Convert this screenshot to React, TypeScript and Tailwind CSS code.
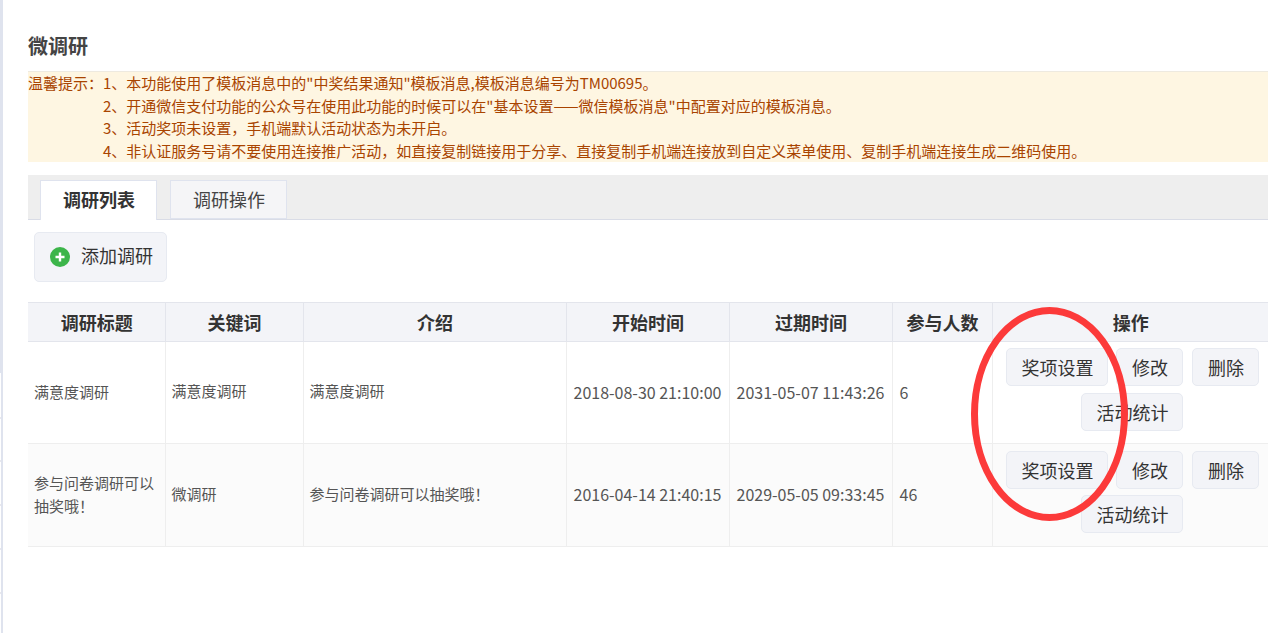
const notes = [
  '1、本功能使用了模板消息中的"中奖结果通知"模板消息,模板消息编号为TM00695。',
  '2、开通微信支付功能的公众号在使用此功能的时候可以在"基本设置——微信模板消息"中配置对应的模板消息。',
  '3、活动奖项未设置，手机端默认活动状态为未开启。',
  '4、非认证服务号请不要使用连接推广活动，如直接复制链接用于分享、直接复制手机端连接放到自定义菜单使用、复制手机端连接生成二维码使用。',
]

const rows = [
  { title: '满意度调研', keyword: '满意度调研', intro: '满意度调研', start: '2018-08-30 21:10:00', end: '2031-05-07 11:43:26', count: '6' },
  { title: '参与问卷调研可以抽奖哦！', keyword: '微调研', intro: '参与问卷调研可以抽奖哦！', start: '2016-04-14 21:40:15', end: '2029-05-05 09:33:45', count: '46' },
]

const font = { fontFamily: '"Microsoft YaHei", "Noto Sans CJK SC", sans-serif' }

function Btn({ children, className = '' }: { children: string; className?: string }) {
  return (
    <a className={`flex h-[38px] items-center justify-center rounded-[5px] border border-[#e7eaf1] bg-[#f3f4f8] pl-[1px] text-[18px] text-[#333] ${className}`}>
      {children}
    </a>
  )
}

export default function App() {
  return (
    <div className="relative h-[633px] w-[1288px] overflow-hidden bg-white" style={font}>
      {/* edge of the sidebar left in the capture */}
      <div className="absolute left-0 top-0 h-[373px] w-[3px] bg-[#dfe3ee]" />
      <div className="absolute bottom-0 left-[1px] top-[373px] w-[2px] bg-[#dfe3ee]" />
      {[417, 460, 504, 548, 592].map((y) => (
        <div key={y} className="absolute left-0 h-[2px] w-[1px] bg-[#e8e8ee]" style={{ top: y }} />
      ))}

      <div className="pl-[28px] pr-[20px] pt-[32px]">
        <h1 className="h-[39px] text-[20px] font-bold leading-[28px] text-[#444]">微调研</h1>
        <div className="flex h-[91px] border-t border-[#eeeae0] bg-[#fef6e2] text-[15px] leading-[22.5px] text-[#a94400]">
          <div className="w-[75px] shrink-0 whitespace-nowrap">温馨提示：</div>
          <div>
            {notes.map((n) => (
              <div key={n} className="whitespace-nowrap">{n}</div>
            ))}
          </div>
        </div>

        <div className="mt-[13px] flex h-[45px] gap-[13px] border-b border-[#d9dce6] bg-[#eeeeee] pl-[12px] pt-[5px]">
          <div className="flex h-[40px] w-[117px] items-center justify-center border border-b-0 border-[#dfe3ee] bg-white pb-[2px] pl-[1px] text-[18px] font-bold text-[#333]">调研列表</div>
          <div className="flex h-[39px] w-[117px] items-center justify-center border border-[#dfe3ee] bg-[#f5f5f7] pl-[1px] text-[18px] text-[#444]">调研操作</div>
        </div>

        <a className="ml-[6px] mt-[12px] flex h-[50px] w-[133px] items-center rounded-[5px] border border-[#e7eaf1] bg-[#f3f4f8] pb-[3px] pl-[15px] text-[18px] text-[#333]">
          <svg className="mr-[11px] mt-[3px] h-[20px] w-[20px]" viewBox="0 0 20 20">
            <circle cx="10" cy="10" r="10" fill="#3cb54a" />
            <path d="M10 5.5v9M5.5 10h9" stroke="#fff" strokeWidth="2.4" />
          </svg>
          添加调研
        </a>

        <table className="mt-[20px] w-[1240px] table-fixed border-collapse">
          <colgroup>
            <col className="w-[137px]" />
            <col className="w-[138px]" />
            <col className="w-[263px]" />
            <col className="w-[163px]" />
            <col className="w-[163px]" />
            <col className="w-[100px]" />
            <col className="w-[276px]" />
          </colgroup>
          <thead>
            <tr className="h-[39px] border-y border-[#e3e5ec] bg-[#f3f4f8] text-[18px] font-bold leading-[24px] text-[#333]">
              {['调研标题', '关键词', '介绍', '开始时间', '过期时间', '参与人数', '操作'].map((h, i) => (
                <th key={h} className={`pb-[1px] pl-[1px] font-bold ${i < 6 ? 'border-r border-[#e3e5ec]' : ''}`}>{h}</th>
              ))}
            </tr>
          </thead>
          <tbody className="text-[15px] text-[#555]">
            {rows.map((r, i) => (
              <tr key={r.title} className={`border-b border-[#eeeeee] ${i === 0 ? 'h-[102px]' : 'h-[103px] bg-[#fbfbfb]'}`}>
                <td className="border-r border-[#eeeeee] px-[6px] pb-[2px] leading-[23px]">{r.title}</td>
                <td className="border-r border-[#eeeeee] px-[6px] pb-[2px]">{r.keyword}</td>
                <td className="border-r border-[#eeeeee] px-[6px] pb-[2px]">{r.intro}</td>
                <td className="whitespace-nowrap border-r border-[#eeeeee] pb-[2px] pl-[7px] text-[16px]">{r.start}</td>
                <td className="whitespace-nowrap border-r border-[#eeeeee] pb-[2px] pl-[7px] text-[16px]">{r.end}</td>
                <td className="border-r border-[#eeeeee] pb-[2px] pl-[7px] text-[16px]">{r.count}</td>
                <td className={`pr-[9px] align-top ${i === 0 ? 'pt-[6px]' : 'pt-[7px]'}`}>
                  <div className="flex justify-end">
                    <Btn className="w-[102px]">奖项设置</Btn>
                    <Btn className="ml-[8px] w-[67px]">修改</Btn>
                    <Btn className="ml-[9px] w-[67px]">删除</Btn>
                  </div>
                  <div className={`mr-[76px] flex justify-end ${i === 0 ? 'mt-[7px]' : 'mt-[6px]'}`}>
                    <Btn className="w-[102px]">活动统计</Btn>
                  </div>
                </td>
              </tr>
            ))}
          </tbody>
        </table>
      </div>

      {/* red marker circled on the screenshot */}
      <svg className="pointer-events-none absolute left-[965px] top-[300px] h-[230px] w-[170px]" viewBox="0 0 170 230">
        <ellipse cx="84.5" cy="114" rx="75" ry="103.5" fill="none" stroke="#fc3a3a" strokeWidth="7" />
      </svg>
    </div>
  )
}
